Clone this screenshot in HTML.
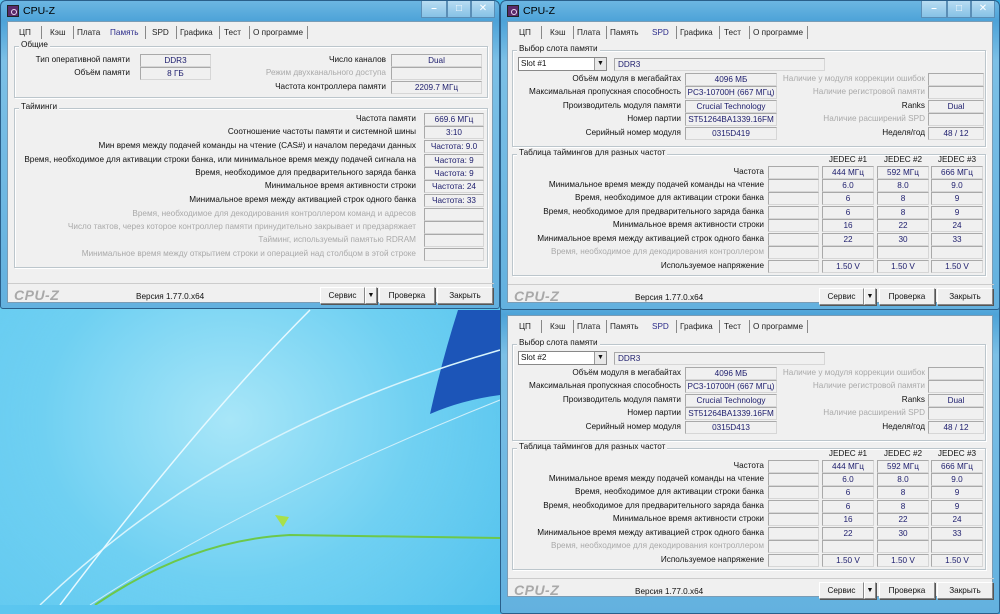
<!DOCTYPE html>
<html><head><meta charset="utf-8"><style>
*{margin:0;padding:0;box-sizing:border-box}
body{width:1000px;height:605px;overflow:hidden;position:relative;font-family:"Liberation Sans","DejaVu Sans",sans-serif;font-size:8.2px;color:#111;
background:radial-gradient(ellipse 420px 360px at 230px 420px,#a8e6f8 0%,#6fd0f2 45%,rgba(60,185,235,0) 100%),linear-gradient(90deg,#5cc6ef,#40b9ea 60%,#30aae0)}
.win{position:absolute;width:500px;height:310px;border:1px solid #2a5f8a;border-radius:6px 6px 3px 3px;background:linear-gradient(180deg,#6cb6e2 0,#4da3d8 20px,#7cc0e6 60px,#63b1df 100%);overflow:hidden}
.ttl{position:absolute;left:22px;top:4px;font-size:10.5px;color:#000}
.ico{position:absolute;left:6px;top:4px;width:12px;height:12px;background:#5a2a6a;border:1px solid #222}
.ico:after{content:"";position:absolute;left:3px;top:3px;width:4px;height:4px;border:1px solid #e8d8f0;border-radius:50%}
.tb{position:absolute;top:0;height:17px;border:1px solid #5a8eb6;border-top:none;background:linear-gradient(#b8dcf2,#86c2e6);color:#fff;text-align:center;font-size:10px;line-height:15px;font-weight:bold}
.cl{position:absolute;left:6px;top:20px;width:486px;height:282px;background:#f0f0f0;border:1px solid #7a9cb5}
.tab{position:absolute;top:6px;color:#222}
.tab.a{color:#2b2b8a}
.sep{position:absolute;top:4px;width:1px;height:13px;background:#888}
.g{position:absolute;border:1px solid #bcc6cc;box-shadow:inset 1px 1px #fff,1px 1px #fff}
.gt{position:absolute;top:-7px;left:4px;background:#f0f0f0;padding:0 2px;color:#111}
.l{position:absolute;text-align:right;white-space:nowrap;height:12px;line-height:12px}
.l.d{color:#a9a9a9}
.b{position:absolute;height:13px;line-height:12px;text-align:center;border:1px solid #d6d6d6;border-top-color:#a9a9a9;border-left-color:#a9a9a9;background:#f0f0f0;color:#1c1c6c;white-space:nowrap;overflow:hidden}
.h{position:absolute;text-align:center;color:#111}
.logo{position:absolute;font-style:italic;font-weight:bold;font-size:14px;color:#a9a9a9;letter-spacing:.5px}
.ver{position:absolute;color:#111}
.btn{position:absolute;height:17px;line-height:15px;text-align:center;border:1px solid #888;border-top-color:#fff;border-left-color:#fff;box-shadow:1px 1px #555;background:#efefef;color:#111}
.cmb{position:absolute;height:14px;line-height:12px;border:1px solid #888;background:#fff;padding-left:2px}
.cmb i{position:absolute;right:0;top:0;width:12px;height:12px;background:#e8e8e8;border-left:1px solid #999;font-style:normal;font-size:7px;text-align:center}
</style></head><body>

<svg style="position:absolute;left:0;top:0" width="1000" height="605">
<path d="M458 310 L500 310 L500 395 Q462 400 430 414 Q442 360 458 310 Z" fill="#1c55b8"/>
<path d="M40 605 Q220 430 500 350" stroke="#d8f4fc" stroke-width="1.5" fill="none"/>
<path d="M60 605 Q200 420 310 310" stroke="#e6f9ff" stroke-width="1.5" fill="none"/>
<path d="M90 605 Q250 500 500 400" stroke="#cfeffa" stroke-width="1" fill="none"/>
<path d="M95 605 Q190 540 290 535 L500 538" stroke="#6cc84a" stroke-width="2" fill="none"/>
<path d="M275 515 l8 12 l6 -10 z" fill="#a8e04a"/>
</svg>

<!-- second right window (behind) -->
<div class="win" style="left:500px;top:294px;height:320px">
<div class="cl">
<span class="tab" style="left:11px">ЦП</span><span class="sep" style="left:33px"></span>
<span class="tab" style="left:42px">Кэш</span><span class="sep" style="left:65px"></span>
<span class="tab" style="left:69px">Плата</span><span class="sep" style="left:98px"></span>
<span class="tab" style="left:102px">Память</span>
<span class="tab a" style="left:144px">SPD</span><span class="sep" style="left:168px"></span>
<span class="tab" style="left:172px">Графика</span><span class="sep" style="left:211px"></span>
<span class="tab" style="left:216px">Тест</span><span class="sep" style="left:241px"></span>
<span class="tab" style="left:245px">О программе</span><span class="sep" style="left:299px"></span>
<div class="g" style="left:4px;top:28px;width:474px;height:97px"><span class="gt">Выбор слота памяти</span></div>
<div class="cmb" style="left:10px;top:35px;width:89px">Slot #2<i>▼</i></div>
<div class="b" style="left:106px;top:36px;width:211px;text-align:left;padding-left:3px">DDR3</div>
<div class="l" style="left:0;width:173px;top:51px">Объём модуля в мегабайтах</div><div class="b" style="left:177px;top:51px;width:92px">4096 МБ</div>
<div class="l" style="left:0;width:173px;top:64px">Максимальная пропускная способность</div><div class="b" style="left:177px;top:64px;width:92px">PC3-10700H (667 МГц)</div>
<div class="l" style="left:0;width:173px;top:78px">Производитель модуля памяти</div><div class="b" style="left:177px;top:78px;width:92px">Crucial Technology</div>
<div class="l" style="left:0;width:173px;top:91px">Номер партии</div><div class="b" style="left:177px;top:91px;width:92px">ST51264BA1339.16FM</div>
<div class="l" style="left:0;width:173px;top:105px">Серийный номер модуля</div><div class="b" style="left:177px;top:105px;width:92px">0315D413</div>
<div class="l d" style="left:250px;width:167px;top:51px">Наличие у модуля коррекции ошибок</div><div class="b" style="left:420px;top:51px;width:56px"></div>
<div class="l d" style="left:250px;width:167px;top:64px">Наличие регистровой памяти</div><div class="b" style="left:420px;top:64px;width:56px"></div>
<div class="l" style="left:250px;width:167px;top:78px">Ranks</div><div class="b" style="left:420px;top:78px;width:56px">Dual</div>
<div class="l d" style="left:250px;width:167px;top:91px">Наличие расширений SPD</div><div class="b" style="left:420px;top:91px;width:56px"></div>
<div class="l" style="left:250px;width:167px;top:105px">Неделя/год</div><div class="b" style="left:420px;top:105px;width:56px">48 / 12</div>
<div class="g" style="left:4px;top:132px;width:474px;height:122px"><span class="gt">Таблица таймингов для разных частот</span></div>
<div class="h" style="left:314px;top:133px;width:52px">JEDEC #1</div><div class="h" style="left:369px;top:133px;width:52px">JEDEC #2</div><div class="h" style="left:423px;top:133px;width:52px">JEDEC #3</div>
<div class="l" style="left:0;width:256px;top:144px">Частота</div><div class="b" style="left:260px;top:144px;width:51px"></div><div class="b" style="left:314px;top:144px;width:52px">444 МГц</div><div class="b" style="left:369px;top:144px;width:52px">592 МГц</div><div class="b" style="left:423px;top:144px;width:52px">666 МГц</div>
<div class="l" style="left:0;width:256px;top:157px">Минимальное время между подачей команды на чтение</div><div class="b" style="left:260px;top:157px;width:51px"></div><div class="b" style="left:314px;top:157px;width:52px">6.0</div><div class="b" style="left:369px;top:157px;width:52px">8.0</div><div class="b" style="left:423px;top:157px;width:52px">9.0</div>
<div class="l" style="left:0;width:256px;top:170px">Время, необходимое для активации строки банка</div><div class="b" style="left:260px;top:170px;width:51px"></div><div class="b" style="left:314px;top:170px;width:52px">6</div><div class="b" style="left:369px;top:170px;width:52px">8</div><div class="b" style="left:423px;top:170px;width:52px">9</div>
<div class="l" style="left:0;width:256px;top:184px">Время, необходимое для предварительного заряда банка</div><div class="b" style="left:260px;top:184px;width:51px"></div><div class="b" style="left:314px;top:184px;width:52px">6</div><div class="b" style="left:369px;top:184px;width:52px">8</div><div class="b" style="left:423px;top:184px;width:52px">9</div>
<div class="l" style="left:0;width:256px;top:197px">Минимальное время активности строки</div><div class="b" style="left:260px;top:197px;width:51px"></div><div class="b" style="left:314px;top:197px;width:52px">16</div><div class="b" style="left:369px;top:197px;width:52px">22</div><div class="b" style="left:423px;top:197px;width:52px">24</div>
<div class="l" style="left:0;width:256px;top:211px">Минимальное время между активацией строк одного банка</div><div class="b" style="left:260px;top:211px;width:51px"></div><div class="b" style="left:314px;top:211px;width:52px">22</div><div class="b" style="left:369px;top:211px;width:52px">30</div><div class="b" style="left:423px;top:211px;width:52px">33</div>
<div class="l d" style="left:0;width:256px;top:224px">Время, необходимое для декодирования контроллером</div><div class="b" style="left:260px;top:224px;width:51px"></div><div class="b" style="left:314px;top:224px;width:52px"></div><div class="b" style="left:369px;top:224px;width:52px"></div><div class="b" style="left:423px;top:224px;width:52px"></div>
<div class="l" style="left:0;width:256px;top:238px">Используемое напряжение</div><div class="b" style="left:260px;top:238px;width:51px"></div><div class="b" style="left:314px;top:238px;width:52px">1.50 V</div><div class="b" style="left:369px;top:238px;width:52px">1.50 V</div><div class="b" style="left:423px;top:238px;width:52px">1.50 V</div>
<div style="position:absolute;left:0;top:262px;width:486px;border-top:1px solid #ccc"></div>
<span class="logo" style="left:6px;top:266px">CPU-Z</span><span class="ver" style="left:127px;top:271px">Версия 1.77.0.x64</span>
<div class="btn" style="left:311px;top:266px;width:45px">Сервис</div><div class="btn" style="left:356px;top:266px;width:12px;font-size:7px">▼</div>
<div class="btn" style="left:371px;top:266px;width:56px">Проверка</div><div class="btn" style="left:429px;top:266px;width:56px">Закрыть</div>
</div></div>

<!-- left window -->
<div class="win" style="left:0;top:0;height:309px">
<div class="ico"></div><span class="ttl">CPU-Z</span>
<div class="tb" style="left:420px;width:26px">–</div><div class="tb" style="left:446px;width:24px">□</div><div class="tb" style="left:470px;width:24px">✕</div>
<div class="cl">
<span class="tab" style="left:11px">ЦП</span><span class="sep" style="left:33px"></span>
<span class="tab" style="left:42px">Кэш</span><span class="sep" style="left:65px"></span>
<span class="tab" style="left:69px">Плата</span>
<span class="tab a" style="left:102px">Память</span><span class="sep" style="left:137px"></span>
<span class="tab" style="left:144px">SPD</span><span class="sep" style="left:168px"></span>
<span class="tab" style="left:172px">Графика</span><span class="sep" style="left:211px"></span>
<span class="tab" style="left:216px">Тест</span><span class="sep" style="left:241px"></span>
<span class="tab" style="left:245px">О программе</span><span class="sep" style="left:299px"></span>
<div class="g" style="left:6px;top:24px;width:474px;height:52px"><span class="gt">Общие</span></div>
<div class="l" style="left:0;width:122px;top:32px">Тип оперативной памяти</div><div class="b" style="left:132px;top:32px;width:71px">DDR3</div>
<div class="l" style="left:0;width:122px;top:45px">Объём памяти</div><div class="b" style="left:132px;top:45px;width:71px">8 ГБ</div>
<div class="l" style="left:200px;width:178px;top:32px">Число каналов</div><div class="b" style="left:383px;top:32px;width:91px">Dual</div>
<div class="l d" style="left:200px;width:178px;top:45px">Режим двухканального доступа</div><div class="b" style="left:383px;top:45px;width:91px"></div>
<div class="l" style="left:200px;width:178px;top:59px">Частота контроллера памяти</div><div class="b" style="left:383px;top:59px;width:91px">2209.7 МГц</div>
<div class="g" style="left:6px;top:86px;width:474px;height:160px"><span class="gt">Тайминги</span></div>
<div class="l" style="left:0;width:408px;top:91px">Частота памяти</div><div class="b" style="left:416px;top:91px;width:60px">669.6 МГц</div>
<div class="l" style="left:0;width:408px;top:104px">Соотношение частоты памяти и системной шины</div><div class="b" style="left:416px;top:104px;width:60px">3:10</div>
<div class="l" style="left:0;width:408px;top:118px">Мин время между подачей команды на чтение (CAS#) и началом передачи данных</div><div class="b" style="left:416px;top:118px;width:60px">Частота: 9.0</div>
<div class="l" style="left:0;width:408px;top:132px">Время, необходимое для активации строки банка, или минимальное время между подачей сигнала на</div><div class="b" style="left:416px;top:132px;width:60px">Частота: 9</div>
<div class="l" style="left:0;width:408px;top:145px">Время, необходимое для предварительного заряда банка</div><div class="b" style="left:416px;top:145px;width:60px">Частота: 9</div>
<div class="l" style="left:0;width:408px;top:158px">Минимальное время активности строки</div><div class="b" style="left:416px;top:158px;width:60px">Частота: 24</div>
<div class="l" style="left:0;width:408px;top:172px">Минимальное время между активацией строк одного банка</div><div class="b" style="left:416px;top:172px;width:60px">Частота: 33</div>
<div class="l d" style="left:0;width:408px;top:186px">Время, необходимое для декодирования контроллером команд и адресов</div><div class="b" style="left:416px;top:186px;width:60px"></div>
<div class="l d" style="left:0;width:408px;top:199px">Число тактов, через которое контроллер памяти принудительно закрывает и предзаряжает</div><div class="b" style="left:416px;top:199px;width:60px"></div>
<div class="l d" style="left:0;width:408px;top:212px">Тайминг, используемый памятью RDRAM</div><div class="b" style="left:416px;top:212px;width:60px"></div>
<div class="l d" style="left:0;width:408px;top:226px">Минимальное время между открытием строки и операцией над столбцом в этой строке</div><div class="b" style="left:416px;top:226px;width:60px"></div>
<div style="position:absolute;left:0;top:261px;width:486px;border-top:1px solid #ccc"></div>
<span class="logo" style="left:6px;top:265px">CPU-Z</span><span class="ver" style="left:128px;top:270px">Версия 1.77.0.x64</span>
<div class="btn" style="left:312px;top:265px;width:45px">Сервис</div><div class="btn" style="left:357px;top:265px;width:12px;font-size:7px">▼</div>
<div class="btn" style="left:371px;top:265px;width:56px">Проверка</div><div class="btn" style="left:429px;top:265px;width:56px">Закрыть</div>
</div></div>

<!-- right top window -->
<div class="win" style="left:500px;top:0">
<div class="ico"></div><span class="ttl">CPU-Z</span>
<div class="tb" style="left:420px;width:26px">–</div><div class="tb" style="left:446px;width:24px">□</div><div class="tb" style="left:470px;width:24px">✕</div>
<div class="cl">
<span class="tab" style="left:11px">ЦП</span><span class="sep" style="left:33px"></span>
<span class="tab" style="left:42px">Кэш</span><span class="sep" style="left:65px"></span>
<span class="tab" style="left:69px">Плата</span><span class="sep" style="left:98px"></span>
<span class="tab" style="left:102px">Память</span>
<span class="tab a" style="left:144px">SPD</span><span class="sep" style="left:168px"></span>
<span class="tab" style="left:172px">Графика</span><span class="sep" style="left:211px"></span>
<span class="tab" style="left:216px">Тест</span><span class="sep" style="left:241px"></span>
<span class="tab" style="left:245px">О программе</span><span class="sep" style="left:299px"></span>
<div class="g" style="left:4px;top:28px;width:474px;height:97px"><span class="gt">Выбор слота памяти</span></div>
<div class="cmb" style="left:10px;top:35px;width:89px">Slot #1<i>▼</i></div>
<div class="b" style="left:106px;top:36px;width:211px;text-align:left;padding-left:3px">DDR3</div>
<div class="l" style="left:0;width:173px;top:51px">Объём модуля в мегабайтах</div><div class="b" style="left:177px;top:51px;width:92px">4096 МБ</div>
<div class="l" style="left:0;width:173px;top:64px">Максимальная пропускная способность</div><div class="b" style="left:177px;top:64px;width:92px">PC3-10700H (667 МГц)</div>
<div class="l" style="left:0;width:173px;top:78px">Производитель модуля памяти</div><div class="b" style="left:177px;top:78px;width:92px">Crucial Technology</div>
<div class="l" style="left:0;width:173px;top:91px">Номер партии</div><div class="b" style="left:177px;top:91px;width:92px">ST51264BA1339.16FM</div>
<div class="l" style="left:0;width:173px;top:105px">Серийный номер модуля</div><div class="b" style="left:177px;top:105px;width:92px">0315D419</div>
<div class="l d" style="left:250px;width:167px;top:51px">Наличие у модуля коррекции ошибок</div><div class="b" style="left:420px;top:51px;width:56px"></div>
<div class="l d" style="left:250px;width:167px;top:64px">Наличие регистровой памяти</div><div class="b" style="left:420px;top:64px;width:56px"></div>
<div class="l" style="left:250px;width:167px;top:78px">Ranks</div><div class="b" style="left:420px;top:78px;width:56px">Dual</div>
<div class="l d" style="left:250px;width:167px;top:91px">Наличие расширений SPD</div><div class="b" style="left:420px;top:91px;width:56px"></div>
<div class="l" style="left:250px;width:167px;top:105px">Неделя/год</div><div class="b" style="left:420px;top:105px;width:56px">48 / 12</div>
<div class="g" style="left:4px;top:132px;width:474px;height:122px"><span class="gt">Таблица таймингов для разных частот</span></div>
<div class="h" style="left:314px;top:133px;width:52px">JEDEC #1</div><div class="h" style="left:369px;top:133px;width:52px">JEDEC #2</div><div class="h" style="left:423px;top:133px;width:52px">JEDEC #3</div>
<div class="l" style="left:0;width:256px;top:144px">Частота</div><div class="b" style="left:260px;top:144px;width:51px"></div><div class="b" style="left:314px;top:144px;width:52px">444 МГц</div><div class="b" style="left:369px;top:144px;width:52px">592 МГц</div><div class="b" style="left:423px;top:144px;width:52px">666 МГц</div>
<div class="l" style="left:0;width:256px;top:157px">Минимальное время между подачей команды на чтение</div><div class="b" style="left:260px;top:157px;width:51px"></div><div class="b" style="left:314px;top:157px;width:52px">6.0</div><div class="b" style="left:369px;top:157px;width:52px">8.0</div><div class="b" style="left:423px;top:157px;width:52px">9.0</div>
<div class="l" style="left:0;width:256px;top:170px">Время, необходимое для активации строки банка</div><div class="b" style="left:260px;top:170px;width:51px"></div><div class="b" style="left:314px;top:170px;width:52px">6</div><div class="b" style="left:369px;top:170px;width:52px">8</div><div class="b" style="left:423px;top:170px;width:52px">9</div>
<div class="l" style="left:0;width:256px;top:184px">Время, необходимое для предварительного заряда банка</div><div class="b" style="left:260px;top:184px;width:51px"></div><div class="b" style="left:314px;top:184px;width:52px">6</div><div class="b" style="left:369px;top:184px;width:52px">8</div><div class="b" style="left:423px;top:184px;width:52px">9</div>
<div class="l" style="left:0;width:256px;top:197px">Минимальное время активности строки</div><div class="b" style="left:260px;top:197px;width:51px"></div><div class="b" style="left:314px;top:197px;width:52px">16</div><div class="b" style="left:369px;top:197px;width:52px">22</div><div class="b" style="left:423px;top:197px;width:52px">24</div>
<div class="l" style="left:0;width:256px;top:211px">Минимальное время между активацией строк одного банка</div><div class="b" style="left:260px;top:211px;width:51px"></div><div class="b" style="left:314px;top:211px;width:52px">22</div><div class="b" style="left:369px;top:211px;width:52px">30</div><div class="b" style="left:423px;top:211px;width:52px">33</div>
<div class="l d" style="left:0;width:256px;top:224px">Время, необходимое для декодирования контроллером</div><div class="b" style="left:260px;top:224px;width:51px"></div><div class="b" style="left:314px;top:224px;width:52px"></div><div class="b" style="left:369px;top:224px;width:52px"></div><div class="b" style="left:423px;top:224px;width:52px"></div>
<div class="l" style="left:0;width:256px;top:238px">Используемое напряжение</div><div class="b" style="left:260px;top:238px;width:51px"></div><div class="b" style="left:314px;top:238px;width:52px">1.50 V</div><div class="b" style="left:369px;top:238px;width:52px">1.50 V</div><div class="b" style="left:423px;top:238px;width:52px">1.50 V</div>
<div style="position:absolute;left:0;top:262px;width:486px;border-top:1px solid #ccc"></div>
<span class="logo" style="left:6px;top:266px">CPU-Z</span><span class="ver" style="left:127px;top:271px">Версия 1.77.0.x64</span>
<div class="btn" style="left:311px;top:266px;width:45px">Сервис</div><div class="btn" style="left:356px;top:266px;width:12px;font-size:7px">▼</div>
<div class="btn" style="left:371px;top:266px;width:56px">Проверка</div><div class="btn" style="left:429px;top:266px;width:56px">Закрыть</div>
</div></div>

</body></html>
